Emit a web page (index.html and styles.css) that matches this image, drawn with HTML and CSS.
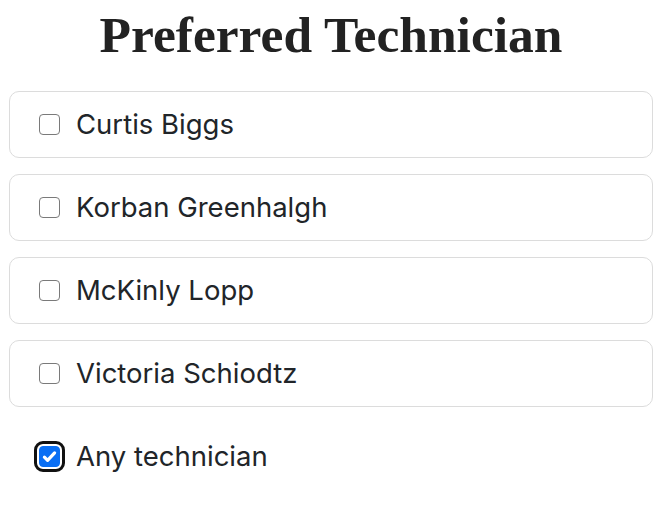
FILE: index.html
```html
<!DOCTYPE html>
<html lang="en">
<head>
    <meta charset="UTF-8">
    <meta name="viewport" content="width=device-width, initial-scale=1.0">
    <title>Preferred Technician</title>
    <link rel="stylesheet" href="styles.css">
</head>
<body>
    <div class="picker">
        <h1>Preferred Technician</h1>
        <label class="tech">
            <input type="checkbox" name="tech" value="curtis">
            <span>Curtis Biggs</span>
        </label>
        <label class="tech">
            <input type="checkbox" name="tech" value="korban">
            <span>Korban Greenhalgh</span>
        </label>
        <label class="tech">
            <input type="checkbox" name="tech" value="mckinly">
            <span>McKinly Lopp</span>
        </label>
        <label class="tech">
            <input type="checkbox" name="tech" value="victoria">
            <span>Victoria Schiodtz</span>
        </label>
        <label class="tech any">
            <input type="checkbox" name="tech" value="any" class="focused" checked>
            <span>Any technician</span>
        </label>
    </div>
</body>
</html>
```

FILE: styles.css
```css
*{
    margin: 0;
    padding: 0;
    box-sizing: border-box;
}
body{
    background: #fff;
    color: #212529;
    font-family: Inter, "Noto Sans", sans-serif;
}
.picker{
    padding: 0 13px 0 9px;
    display: flex;
    flex-direction: column;
    gap: 16px;
}
.picker h1{
    font-family: "Liberation Serif", serif;
    font-weight: bold;
    font-size: 51.5px;
    line-height: 60px;
    text-align: center;
    color: #222;
    margin: 5px 0 10px;
}
.tech{
    display: flex;
    align-items: center;
    gap: 16px;
    padding: 12px 29px;
    border: 1px solid #dcdcdc;
    border-radius: 10px;
    font-size: 27.5px;
    line-height: 41px;
    cursor: pointer;
}
.tech.any{
    border-color: transparent;
}
.tech input{
    appearance: none;
    width: 21px;
    height: 21px;
    flex: none;
    border: 1.5px solid #7a7a7a;
    border-radius: 4px;
    background: #fff center / 17px 17px no-repeat;
}
.tech input:checked{
    border-color: #0a6ff4;
    background-color: #0a6ff4;
    background-image: url("data:image/svg+xml,%3Csvg xmlns='http://www.w3.org/2000/svg' viewBox='0 0 16 16'%3E%3Cpath d='M3.2 8.6l3 3L12.8 4.6' fill='none' stroke='%23fff' stroke-width='3' stroke-linecap='round' stroke-linejoin='round'/%3E%3C/svg%3E");
}
.tech input.focused{
    outline: 3px solid #111;
    outline-offset: 2px;
}
```
